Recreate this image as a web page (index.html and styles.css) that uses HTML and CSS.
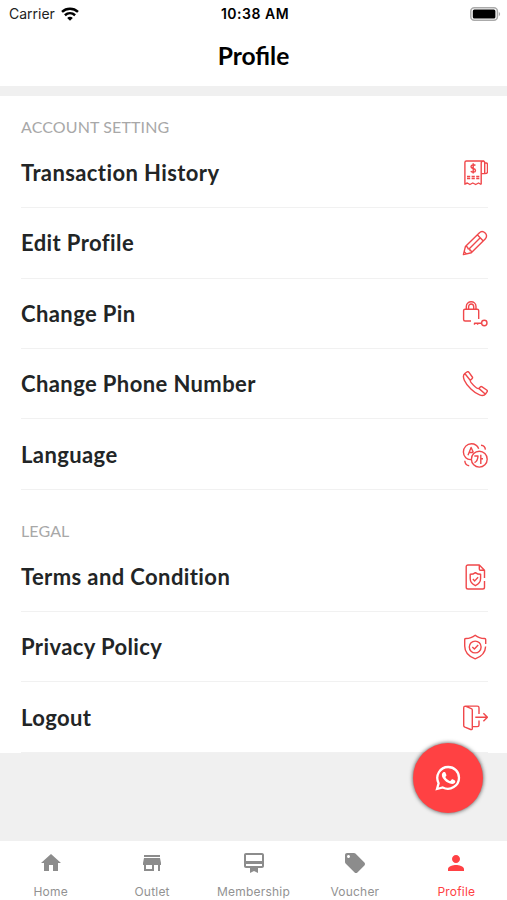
FILE: index.html
```html
<!DOCTYPE html>
<html lang="en">
<head>
  <meta charset="UTF-8">
  <meta name="viewport" content="width=device-width, initial-scale=1.0">
  <title>Profile</title>
  <link rel="stylesheet" href="styles.css">
</head>
<body>
  <div class="app">
    <div class="status-bar">
      <div class="carrier">
        <span>Carrier</span>
        <svg class="wifi" viewBox="0 0 18 14" fill="none" stroke="#000" stroke-width="2.5">
          <path d="M1 4.9C5.6 .7 12.4 .7 17 4.9"/>
          <path d="M3.9 8.2C6.9 5.5 11.1 5.5 14.1 8.2"/>
          <path d="M9 13.7L6.2 10.9C7.8 9.5 10.2 9.5 11.8 10.9Z" fill="#000" stroke="none"/>
        </svg>
      </div>
      <span class="time">10:38 AM</span>
      <svg class="battery" viewBox="0 0 31 14">
        <rect x=".8" y=".8" width="26.6" height="12.4" rx="3.5" fill="#fff" stroke="#aaa" stroke-width="1.5"/>
        <rect x="2.8" y="2.6" width="22.6" height="8.8" rx="1.5"/>
        <path d="M28.8 5v4.2c1.8-.6 1.8-3.6 0-4.2z" fill="#aaa"/>
      </svg>
    </div>

    <h1 class="title">Profile</h1>

    <div class="section account">
      <h2>ACCOUNT SETTING</h2>
      <a class="row">
        <span>Transaction History</span>
        <svg class="icon" viewBox="0 0 26 26">
          <path d="M19.2 24.5V3.2C19.2 1.8 20 1 21 1H4.4C3.4 1 2.9 1.6 2.9 2.6V24.2L5.3 23L7.9 24.5L10.8 23L13.7 24.5L16.5 23L19.2 24.5"/>
          <path d="M21 1C22.2 1 22.7 1.8 22.7 3V13.6H19.2M22.7 3H24.2C25.2 3 25.5 3.7 25.5 4.6V11.9C25.5 13.2 24.7 13.6 22.7 13.6"/>
          <path d="M13.4 5.5C12.5 4.4 9 4.5 9 6.7C9 9 13.5 8 13.5 10.4C13.5 12.5 10 12.7 8.8 11.3M11.2 3.2V13.6"/>
          <path d="M5 16.5H8.2M9.6 16.5H12.8M14.2 16.5H17.3M5 18.5H8.2M9.6 18.5H12.8M14.2 18.5H17.3"/>
        </svg>
      </a>
      <a class="row">
        <span>Edit Profile</span>
        <svg class="icon" viewBox="0 0 26 26">
          <path d="M1.4 24.6L3.4 16.6L17.2 2.9C21 -.8 27.3 4.9 23.2 9L9.3 22.7ZM3.4 16.6C5 16.3 6 17.2 6 18.7C8 18.7 8.3 20 8 20.6C9.3 20.7 9.9 21.5 9.3 22.7M15.3 4.8L21.3 10.9M7 19L18 8M2.2 21.8L4.2 23.8"/>
        </svg>
      </a>
      <a class="row">
        <span>Change Pin</span>
        <svg class="icon" viewBox="0 0 26 26">
          <path d="M9 20H3.1C2 20 1.6 19.4 1.6 18.5V9.6C1.6 8.6 2.1 8.2 3 8.2H15.2C16.2 8.2 16.7 8.7 16.7 9.6V18M4.3 8.2V5.6C4.3-.8 14-.8 14 5.6V8.2M6.6 8.2V5.8C6.6 2 11.7 2 11.7 5.8V8.2M19.6 22.3H12.5V23.7M15.6 22.3V23.7"/>
          <circle cx="22.3" cy="22" r="2.7"/>
        </svg>
      </a>
      <a class="row">
        <span>Change Phone Number</span>
        <svg class="icon" viewBox="0 0 26 26">
          <path d="M2.8 2.5L4.9 1C5.6 .5 6.3 .6 6.8 1.2L10.3 6C10.7 6.6 10.5 7.3 10 7.7L8.4 9.1C7.6 10 9.5 12.2 11.5 14.2C13.6 16.2 15.9 18.1 16.8 17.4L18.3 15.9C18.8 15.4 19.5 15.4 20.1 15.8L24.7 19C25.4 19.6 25.5 20.3 25 20.9L23.5 23C21.2 26.2 14.8 23.9 8.9 18.1C3 12.4-.7 5.4 2.8 2.5ZM3 2.8L8.2 9.2M16.8 17.4L23.2 23"/>
        </svg>
      </a>
      <a class="row">
        <span>Language</span>
        <svg class="icon" viewBox="0 0 26 26">
          <path d="M9.5 17.5C5 18.2 1.4 14.6 1.4 10C1.4 5.4 5 1.7 9.4 1.7C12.7 1.7 15.6 3.9 16.7 6.8"/>
          <circle cx="17.3" cy="17.2" r="7.9"/>
          <path d="M6 13.3L9.1 5.5L11.4 10.5M7.2 10.5H11"/>
          <path d="M12.3 14H16C15.9 17 14.6 19.6 12.5 20.7M18.8 12.7V22M18.8 16.7H21"/>
          <path d="M19 3.2C21.3 3.4 23.2 5.2 23.4 7.6M2.8 18.8C3 21.7 4.7 23.5 7.2 23.8"/>
        </svg>
      </a>
    </div>

    <div class="section legal">
      <h2>LEGAL</h2>
      <a class="row">
        <span>Terms and Condition</span>
        <svg class="icon" viewBox="0 0 26 26">
          <path d="M22.5 17V23.2C22.5 24.5 21.8 25 20.7 25H6C4.8 25 4.2 24.4 4.2 23.2V2.8C4.2 1.6 4.9 1 6 1H17.3L22.5 6.2V14M17.3 1V5C17.3 6 17.7 6.3 18.5 6.3H22.5"/>
          <path d="M13.4 8.6C15 9.9 16.8 10.3 18.6 10.3V14.6C18.6 18 16.5 20.3 13.4 21.7C10.3 20.3 8.2 18 8.2 14.6V10.3C10 10.3 11.8 9.9 13.4 8.6ZM10.9 15L12.7 16.9L16.1 13.2"/>
        </svg>
      </a>
      <a class="row">
        <span>Privacy Policy</span>
        <svg class="icon" viewBox="0 0 26 26">
          <path d="M23.6 12.5C23.4 18.3 19.2 22.7 13.2 24.9C7 22.6 2.7 18 2.7 12V5.6C2.7 4.8 3 4.5 3.8 4.5C7.5 4.5 10.5 3.5 13.2 1.2C15.9 3.5 19 4.5 22.6 4.5C23.4 4.5 23.7 4.8 23.7 5.6V10"/>
          <circle cx="13.2" cy="13" r="5.9"/>
          <path d="M10.3 12.9L12.4 14.9L16.2 11.1"/>
        </svg>
      </a>
      <a class="row">
        <span>Logout</span>
        <svg class="icon" viewBox="0 0 26 26">
          <path d="M3.4 1.1L9.3 3.6C10 3.9 10.3 4.4 10.3 5.1V23.4C10.3 24.5 9.7 24.9 8.7 24.5L2.9 22.2C2 21.8 1.7 21.3 1.7 20.5V2.7C1.7 1.7 2.3 1.1 3.4 1.1H15.3C16.4 1.1 17 1.7 17 2.7V9M10.3 21.6H15.3C16.4 21.6 17 21 17 20V15.5M13.3 12.2H25M21.4 8.2L25.4 12.2L21.4 16.2"/>
        </svg>
      </a>
    </div>

    <div class="filler"></div>

    <nav class="tabs">
      <a class="tab">
        <svg viewBox="0 0 24 24"><path d="M10 20v-6h4v6h5v-8h3L12 3 2 12h3v8z"/></svg>
        <span>Home</span>
      </a>
      <a class="tab">
        <svg viewBox="0 0 24 24"><path d="M20 4H4v2h16V4zm1 10v-2l-1-5H4l-1 5v2h1v6h10v-6h4v6h2v-6h1zm-9 4H6v-4h6v4z"/></svg>
        <span>Outlet</span>
      </a>
      <a class="tab">
        <svg viewBox="0 0 24 24"><path d="M20 2H4c-1.11 0-2 .89-2 2v11c0 1.11.89 2 2 2h4v5l4-2 4 2v-5h4c1.11 0 2-.89 2-2V4c0-1.11-.89-2-2-2zm0 13H4v-2h16v2zm0-5H4V4h16v6z"/></svg>
        <span>Membership</span>
      </a>
      <a class="tab">
        <svg viewBox="0 0 24 24"><path d="M21.41 11.58l-9-9C12.05 2.22 11.55 2 11 2H4c-1.1 0-2 .9-2 2v7c0 .55.22 1.05.59 1.42l9 9c.36.36.86.58 1.41.58s1.05-.22 1.41-.59l7-7c.37-.36.59-.86.59-1.41s-.23-1.06-.59-1.42zM5.5 7C4.67 7 4 6.33 4 5.5S4.67 4 5.5 4 7 4.67 7 5.5 6.33 7 5.5 7z"/></svg>
        <span>Voucher</span>
      </a>
      <a class="tab active">
        <svg viewBox="0 0 24 24"><path d="M12 12c2.21 0 4-1.79 4-4s-1.79-4-4-4-4 1.79-4 4 1.79 4 4 4zm0 2c-2.67 0-8 1.34-8 4v2h16v-2c0-2.66-5.33-4-8-4z"/></svg>
        <span>Profile</span>
      </a>
    </nav>

    <button class="whatsapp" aria-label="WhatsApp">
      <svg viewBox="0 0 26 26">
        <path d="M2 24L3.6 18.3C-.3 10.5 5 2 13.2 2C19.3 2 24 6.8 24 12.8C24 21 15.3 26.2 7.7 22.5Z" fill="none" stroke="#fff" stroke-width="2.3"/>
        <path d="M8.8 7.1H9.6C10 7.1 10.3 7.3 10.5 7.8L11.4 10C11.6 10.5 11.2 11 10.5 11.8C10.3 12 10.4 12.3 10.6 12.6C11.7 14.3 13 15.3 14.7 16C15.1 16.2 15.3 16.1 15.6 15.8L16.7 14.5C17 14.1 17.3 14.2 17.7 14.3L19.9 15.4C20.6 15.7 20.3 17.3 19.7 17.9C17.9 19.7 15.3 18.9 12.6 17.6C10.6 16.5 9 14.9 7.8 13C6.2 10.6 6.8 8.2 8.2 7.3Z" fill="#fff"/>
      </svg>
    </button>
  </div>
</body>
</html>
```
FILE: styles.css
```css
* {
  box-sizing: border-box;
}
body {
  margin: 0;
  font-family: Lato, "Open Sans", sans-serif;
  background-color: #fff;
}
.app {
  position: relative;
  display: flex;
  flex-direction: column;
  height: 900px;
  overflow: hidden;
}
.status-bar {
  display: grid;
  grid-template-columns: 1fr auto 1fr;
  align-items: center;
  height: 27px;
  padding: 0 6px 0 9px;
  font-family: Inter, sans-serif;
  font-size: 14px;
  color: #222;
}
.carrier {
  display: flex;
  align-items: center;
  gap: 6px;
}
.wifi {
  width: 18px;
  height: 14px;
}
.time {
  font-weight: 600;
  letter-spacing: 0.5px;
  color: #000;
}
.battery {
  width: 31px;
  height: 14px;
  justify-self: end;
}
.title {
  height: 59px;
  margin: 0;
  font-size: 24.6px;
  line-height: 58px;
  text-align: center;
  color: #000;
}
.section {
  padding: 21px 19px 0 21px;
}
.account {
  border-top: 10px solid #f0f0f0;
}
.legal {
  padding-top: 31px;
}
h2 {
  margin: 0;
  height: 20.8px;
  font-size: 16px;
  line-height: 20px;
  font-weight: 400;
  letter-spacing: 0.12px;
  color: #a8a8a8;
}
.row {
  display: flex;
  align-items: center;
  justify-content: space-between;
  height: 70.4px;
  border-bottom: 1px solid #f1f1f1;
  font-size: 22px;
  font-weight: 700;
  letter-spacing: 0.4px;
  color: #222526;
}
.icon {
  width: 26px;
  height: 26px;
  margin-top: 1px;
  fill: none;
  stroke: #f0484b;
  stroke-width: 1.4;
  stroke-linejoin: round;
}
.filler {
  flex: 1;
  background-color: #f0f0f0;
}
.tabs {
  display: flex;
  height: 59px;
  background-color: #fff;
}
.tab {
  flex: 1;
  display: flex;
  flex-direction: column;
  align-items: center;
  gap: 9px;
  padding-top: 10px;
  font-family: Inter, sans-serif;
  font-size: 12px;
  line-height: 16px;
  letter-spacing: 0.2px;
  color: #929292;
}
.tab svg {
  flex-shrink: 0;
  width: 24px;
  height: 24px;
  fill: #8c8c8c;
}
.tab.active {
  color: #ff4144;
}
.tab.active svg {
  fill: #ff4144;
}
/* floating chat button */
.whatsapp {
  position: absolute;
  right: 24px;
  bottom: 87px;
  display: flex;
  align-items: center;
  justify-content: center;
  width: 70px;
  height: 70px;
  padding: 0;
  border: none;
  border-radius: 50%;
  background-color: #ff4143;
  box-shadow: 0 0 4px rgba(0, 0, 0, 0.7);
}
.whatsapp svg {
  width: 26px;
  height: 26px;
}
```
